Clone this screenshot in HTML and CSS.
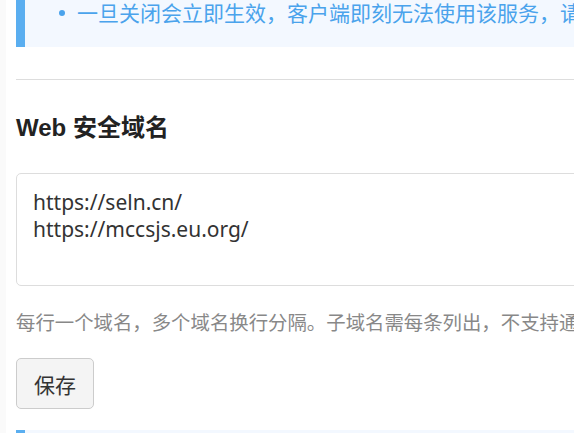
FILE: index.html
```html
<!DOCTYPE html>
<html lang="zh-CN">
<head>
<meta charset="utf-8">
<link rel="stylesheet" href="styles.css">
</head>
<body>
<div class="page">
  <div class="notice">
    <ul class="notice-list">
      <li>一旦关闭会立即生效，客户端即刻无法使用该服务，请谨慎操作。</li>
    </ul>
  </div>
  <hr class="divider">
  <h3 class="title">Web 安全域名</h3>
  <textarea class="domains">https://seln.cn/
https://mccsjs.eu.org/</textarea>
  <p class="help">每行一个域名，多个域名换行分隔。子域名需每条列出，不支持通配符。</p>
  <button class="btn">保存</button>
  <div class="notice notice-next"></div>
</div>
</body>
</html>
```
FILE: styles.css
```css
html, body {
  margin: 0;
  padding: 0;
  overflow: hidden;
  background: #fafafa;
}
.page {
  margin-left: 6px;
  width: 900px;
  padding-left: 10px;
  background: #fff;
  font-family: "Noto Sans", "Noto Sans CJK SC", sans-serif;
  min-height: 433px;
}
.notice {
  background: #f3f8ff;
  border-left: 9px solid #5aaef0;
  padding: 0 0 23px 0;
}
.notice-list {
  margin: 0;
  padding: 0 0 0 52px;
  list-style: none;
  color: #4aa3ec;
  font-size: 21px;
  line-height: 24px;
  white-space: nowrap;
  font-family: "Noto Sans CJK SC", sans-serif;
}
.notice-list li {
  position: relative;
}
.notice-list li::before {
  content: "";
  position: absolute;
  left: -18px;
  top: 10px;
  width: 6px;
  height: 6px;
  border-radius: 50%;
  background: #4aa3ec;
}
.divider {
  border: 0;
  border-top: 1px solid #ddd;
  margin: 32px 0 0 0;
}
.title {
  margin: 33px 0 0 0;
  font-family: "Liberation Sans", "Noto Sans CJK SC", sans-serif;
  font-size: 24px;
  line-height: 30px;
  font-weight: bold;
  color: #222;
}
.domains {
  display: block;
  box-sizing: border-box;
  margin-top: 30px;
  width: 100%;
  height: 113px;
  padding: 15px 16px;
  border: 1px solid #ddd;
  border-radius: 5px;
  font-family: "Noto Sans", "Noto Sans CJK SC", sans-serif;
  font-size: 21px;
  line-height: 27px;
  color: #333;
  resize: none;
}
.help {
  margin: 24px 0 0 0;
  font-family: "Noto Sans CJK SC", sans-serif;
  font-size: 19.4px;
  line-height: 24px;
  color: #888;
  white-space: nowrap;
}
.btn {
  display: block;
  margin-top: 24px;
  width: 78px;
  height: 51px;
  background: #f4f4f4;
  border: 1px solid #ccc;
  border-radius: 5px;
  font-family: "Noto Sans CJK SC", sans-serif;
  font-size: 21px;
  color: #333;
}
.notice-next {
  margin-top: 21px;
  height: 40px;
  padding: 0;
}
```
